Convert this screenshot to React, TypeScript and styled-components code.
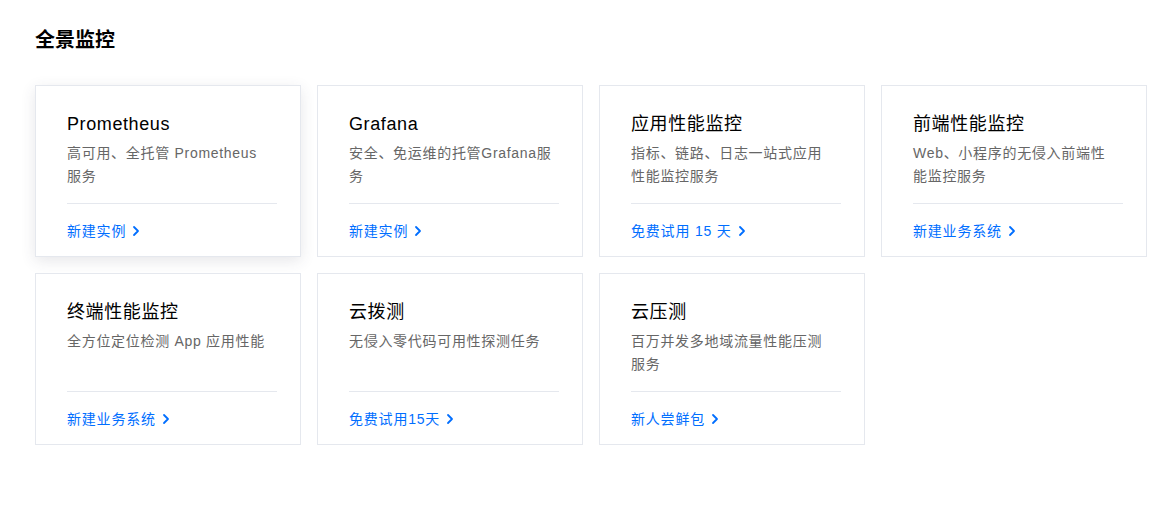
import React from "react";
import styled, { createGlobalStyle } from "styled-components";

const Global = createGlobalStyle`
  body {
    margin: 0;
    background: #fff;
    font-family: "Liberation Sans", "Noto Sans CJK SC", sans-serif;
    -webkit-font-smoothing: antialiased;
  }
`;

const Page = styled.div`
  padding: 26px 28px 40px 35px;
`;

const Heading = styled.h2`
  margin: 0;
  font-size: 20px;
  line-height: 28px;
  font-weight: 700;
  color: #000;
`;

const Grid = styled.div`
  margin-top: 31px;
  display: grid;
  grid-template-columns: repeat(4, 1fr);
  gap: 16px;
`;

const Card = styled.div<{ $active?: boolean }>`
  box-sizing: border-box;
  height: 172px;
  padding: 25px 23px 0 31px;
  border: 1px solid #e5e8ee;
  background: #fff;
  display: flex;
  flex-direction: column;
  box-shadow: ${(p) => (p.$active ? "0 4px 14px rgba(54, 58, 80, 0.12)" : "none")};
`;

const Title = styled.div`
  font-size: 18px;
  line-height: 26px;
  letter-spacing: 0.6px;
  color: #000;
`;

const Desc = styled.div`
  margin-top: 5px;
  padding-right: 5px;
  height: 46px;
  font-size: 14px;
  line-height: 23px;
  letter-spacing: 0.7px;
  color: #666;
`;

const Divider = styled.div`
  margin-top: 15px;
  height: 1px;
  background: #e5e8ee;
`;

const Link = styled.a`
  margin-top: 16px;
  display: inline-flex;
  align-items: center;
  gap: 6px;
  font-size: 14px;
  line-height: 22px;
  letter-spacing: 0.8px;
  color: #006eff;
  text-decoration: none;
  cursor: pointer;
`;

const Chevron = () => (
  <svg width="8" height="12" viewBox="0 0 8 12" fill="none">
    <path d="M2 2l4 4-4 4" stroke="#006eff" strokeWidth="1.8" strokeLinecap="round" strokeLinejoin="round" />
  </svg>
);

const items = [
  { title: "Prometheus", desc: "高可用、全托管 Prometheus 服务", link: "新建实例", active: true },
  { title: "Grafana", desc: "安全、免运维的托管Grafana服务", link: "新建实例" },
  { title: "应用性能监控", desc: "指标、链路、日志一站式应用性能监控服务", link: "免费试用 15 天" },
  { title: "前端性能监控", desc: "Web、小程序的无侵入前端性能监控服务", link: "新建业务系统" },
  { title: "终端性能监控", desc: "全方位定位检测 App 应用性能", link: "新建业务系统" },
  { title: "云拨测", desc: "无侵入零代码可用性探测任务", link: "免费试用15天" },
  { title: "云压测", desc: "百万并发多地域流量性能压测服务", link: "新人尝鲜包" },
];

export default function App() {
  return (
    <Page>
      <Global />
      <Heading>全景监控</Heading>
      <Grid>
        {items.map((it) => (
          <Card key={it.title} $active={it.active}>
            <Title>{it.title}</Title>
            <Desc>{it.desc}</Desc>
            <Divider />
            <div>
              <Link>
                {it.link}
                <Chevron />
              </Link>
            </div>
          </Card>
        ))}
      </Grid>
    </Page>
  );
}
